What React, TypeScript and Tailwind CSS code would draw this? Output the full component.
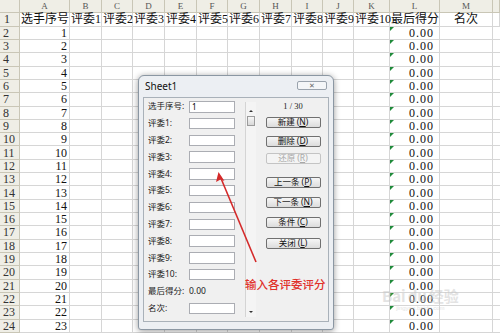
import React from "react";

const colLetters = ["", "A", "B", "C", "D", "E", "F", "G", "H", "I", "J", "K", "L", "M", ""];
const headRow = ["选手序号", "评委1", "评委2", "评委3", "评委4", "评委5", "评委6", "评委7", "评委8", "评委9", "评委10", "最后得分", "名次", ""];

const gridCols =
  "grid grid-cols-[20px_50px_32px_31px_32px_32px_31px_32px_32px_31px_31px_36px_50px_53px_1fr] auto-rows-[13.32px]";

const sheetFont = { fontFamily: '"Liberation Serif", "Noto Sans CJK SC", serif' };
const uiFont = { fontFamily: '"Noto Sans", "Noto Sans CJK SC", sans-serif' };

function Sheet() {
  const rows = Array.from({ length: 23 }, (_, i) => i + 1);
  return (
    <div className={`${gridCols} bg-white text-[12px] leading-none text-[#111]`} style={sheetFont}>
      {/* column letters */}
      {colLetters.map((c, i) => (
        <div
          key={"h" + i}
          className="flex items-center justify-center border-r border-b border-[#c9c6b6] bg-[#efeee6] text-[9px] text-[#555]"
        >
          {c}
        </div>
      ))}

      {/* row 1: titles */}
      <div className="flex items-center border-r border-b border-[#c9c6b6] bg-[#efeee6] pl-[4px] text-[#333]">1</div>
      {headRow.map((t, i) => (
        <div
          key={"t" + i}
          className={`flex items-center whitespace-nowrap border-r border-b border-[#d6d6d6] ${
            i === 12 ? "justify-center" : "pl-[1px]"
          }`}
        >
          {t}
        </div>
      ))}

      {rows.map((n) => (
        <React.Fragment key={n}>
          <div className="flex items-center border-r border-b border-[#c9c6b6] bg-[#efeee6] pl-[3px] text-[#333]">
            {n + 1}
          </div>
          <div className="flex items-center justify-end border-r border-b border-[#d6d6d6] pr-[2px]">{n}</div>
          {Array.from({ length: 10 }, (_, j) => (
            <div key={j} className="border-r border-b border-[#d6d6d6]" />
          ))}
          <div className="relative flex items-center justify-end border-r border-b border-[#d6d6d6] pr-[5px] tracking-[1px]">
            <span className="absolute left-0 top-0 h-0 w-0 border-t-[4px] border-r-[4px] border-t-[#1f8a3a] border-r-transparent" />
            0.00
          </div>
          <div className="border-r border-b border-[#d6d6d6]" />
          <div className="border-b border-[#d6d6d6]" />
        </React.Fragment>
      ))}
    </div>
  );
}

function Field({ label, value, box = true }: { label: string; value?: string; box?: boolean }) {
  return (
    <div className="flex h-[16.8px] items-start">
      <div className="flex h-[11.5px] items-center">
        <span className="w-[41px] whitespace-nowrap text-[8.5px] text-[#222]">{label}</span>
        {box ? (
          <div className="flex h-[11.5px] w-[46px] items-center border border-[#abadb3] bg-white pl-[2px] text-[8px]">
            {value}
          </div>
        ) : (
          <span className="text-[8.5px] text-[#222]">{value}</span>
        )}
      </div>
    </div>
  );
}

function Btn({ label, k, disabled, className }: { label: string; k: string; disabled?: boolean; className: string }) {
  return (
    <div
      className={`flex h-[11px] w-[55px] items-center justify-center gap-[2px] rounded-[2px] border text-[8.5px] leading-none ${
        disabled
          ? "border-[#c4c4c4] bg-[#f4f4f4] text-[#a8a8a8]"
          : "border-[#707070] bg-gradient-to-b from-[#f6f6f6] to-[#dcdcdc] text-[#111]"
      } ${className}`}
    >
      <span>{label}</span>
      <span>
        (<span className="underline">{k}</span>)
      </span>
    </div>
  );
}

function Dialog() {
  const judges = Array.from({ length: 10 }, (_, i) => `评委${i + 1}:`);
  return (
    <div
      className="absolute left-[138px] top-[75px] flex h-[255px] w-[196px] flex-col rounded-t-[6px] rounded-b-[3px] border border-[#8b97a3] bg-[#eceff3] shadow-[0_1px_6px_rgba(0,0,0,0.4)]"
      style={uiFont}
    >
      <div className="flex h-[21px] items-center justify-between pl-[6px] pr-[6px]">
        <span className="text-[10px] text-[#111]">Sheet1</span>
        <div className="mb-[3px] flex h-[9px] w-[30px] items-center justify-center rounded-[2px] border border-[#9aa3ad] bg-[#f4f6f8] text-[7px] leading-none text-[#666]">
          ✕
        </div>
      </div>

      <div className="mx-[4px] flex h-[225px] border border-[#a9b1b9] bg-[#f0f0f0]">
        {/* form */}
        <div className="flex w-[101px] flex-col pl-[4px] pt-[3px]">
          <Field label="选手序号:" value="1" />
          {judges.map((j) => (
            <Field key={j} label={j} />
          ))}
          <Field label="最后得分:" value="0.00" box={false} />
          <Field label="名次:" />
        </div>

        {/* scroll bar */}
        <div className="relative my-[4px] w-[11px] border-l border-[#d4d4d4] bg-[#f4f4f4]">
          <span className="absolute left-[3px] top-[8px] h-0 w-0 border-x-[2px] border-b-[2px] border-x-transparent border-b-[#333]" />
          <div className="absolute left-[1px] top-[14px] h-[10px] w-[8px] border border-[#9b9b9b] bg-gradient-to-b from-[#f6f6f6] to-[#d8d8d8]" />
          <span className="absolute bottom-[4px] left-[3px] h-0 w-0 border-x-[2px] border-t-[2px] border-x-transparent border-t-[#333]" />
        </div>

        {/* record buttons */}
        <div className="flex flex-1 flex-col items-center pl-[2px] pt-[3px]">
          <div className="flex h-[11px] items-center text-[8.5px] text-[#222]" style={{ fontFamily: '"Liberation Serif", serif' }}>
            1&nbsp;/&nbsp;30
          </div>
          <Btn label="新建" k="N" className="mt-[5px]" />
          <Btn label="删除" k="D" className="mt-[8px]" />
          <Btn label="还原" k="R" disabled className="mt-[6px]" />
          <Btn label="上一条" k="P" className="mt-[13px]" />
          <Btn label="下一条" k="N" className="mt-[9px]" />
          <Btn label="条件" k="C" className="mt-[9px]" />
          <Btn label="关闭" k="L" className="mt-[10px]" />
        </div>
      </div>
    </div>
  );
}

export default function App() {
  return (
    <div className="relative h-[333px] w-[500px] overflow-hidden bg-white">
      <Sheet />
      <Dialog />

      {/* annotation arrow */}
      <svg className="absolute left-0 top-0" width="500" height="333" viewBox="0 0 500 333">
        <line x1="256" y1="262" x2="220" y2="176" stroke="#d42a2a" strokeWidth="1.6" />
        <path d="M218.5 172 L216 182 L220.5 179.5 L224.5 181 Z" fill="#d42a2a" />
      </svg>
      <div
        className="absolute left-[245px] top-[276px] whitespace-nowrap text-[11.5px] font-medium text-[#e0312b]"
        style={{ fontFamily: '"Noto Sans CJK SC", sans-serif' }}
      >
        输入各评委评分
      </div>

      {/* watermark */}
      <div className="absolute left-[382px] top-[288px] flex flex-col items-center leading-none text-[#c8c8c8] opacity-50">
        <span className="text-[15px] font-bold" style={{ fontFamily: '"Noto Sans CJK SC", sans-serif' }}>
          Bai<span className="mx-[2px]">du</span>经验
        </span>
        <span className="mt-[2px] text-[6px]" style={{ fontFamily: '"Liberation Sans", sans-serif' }}>
          jingyan.baidu.com
        </span>
      </div>
    </div>
  );
}
